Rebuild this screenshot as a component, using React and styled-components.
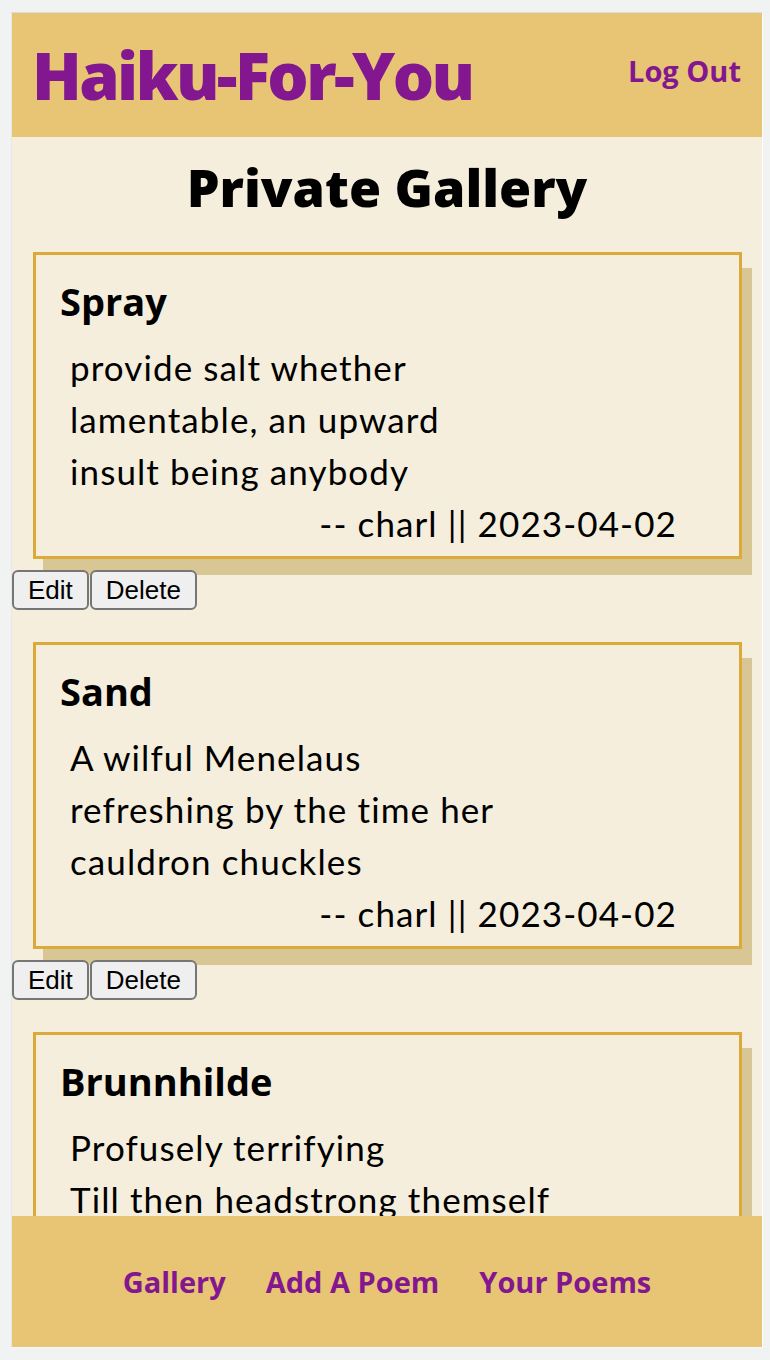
import React from 'react';
import styled, { createGlobalStyle } from 'styled-components';

const poems = [
    {
        id: 1,
        title: 'Spray',
        lines: ['provide salt whether', 'lamentable, an upward', 'insult being anybody'],
        author: 'charl',
        date: '2023-04-02',
    },
    {
        id: 2,
        title: 'Sand',
        lines: ['A wilful Menelaus', 'refreshing by the time her', 'cauldron chuckles'],
        author: 'charl',
        date: '2023-04-02',
    },
    {
        id: 3,
        title: 'Brunnhilde',
        lines: ['Profusely terrifying', 'Till then headstrong themself', 'over the cold hills'],
        author: 'charl',
        date: '2023-04-02',
    },
];

export default function App() {
    return (
        <>
            <GlobalStyle />
            <Screen>
                <Frame>
                    <Header>
                        <Logo>Haiku-For-You</Logo>
                        <LogOut href="#">Log Out</LogOut>
                    </Header>

                    <Main>
                        <PageTitle>Private Gallery</PageTitle>

                        {poems.map((poem) => (
                            <Entry key={poem.id}>
                                <Card>
                                    <CardTitle>{poem.title}</CardTitle>
                                    <Poem>
                                        {poem.lines.map((line, i) => (
                                            <Line key={i}>{line}</Line>
                                        ))}
                                        <Byline>-- {poem.author} || {poem.date}</Byline>
                                    </Poem>
                                </Card>
                                <Actions>
                                    <Button>Edit</Button>
                                    <Button>Delete</Button>
                                </Actions>
                            </Entry>
                        ))}
                    </Main>

                    <Footer>
                        <NavLink href="#">Gallery</NavLink>
                        <NavLink href="#">Add A Poem</NavLink>
                        <NavLink href="#">Your Poems</NavLink>
                    </Footer>
                </Frame>
            </Screen>
        </>
    );
}

const GlobalStyle = createGlobalStyle`
    html, body {
        margin: 0;
        padding: 0;
        background: #f1f2f2;
    }
    * {
        box-sizing: border-box;
    }
`;

const Screen = styled.div`
    padding: 12px 0 0 11px;
    height: 1360px;
`;

const Frame = styled.div`
    width: 752px;
    height: 1336px;
    border-top: 1px solid #dcdde0;
    border-left: 1px solid #e6e7e9;
    border-right: 1px solid #fdfdfd;
    border-bottom: 1px solid #f7f7f7;
    display: flex;
    flex-direction: column;
    overflow: hidden;
    background: #f5eedc;
`;

const Header = styled.header`
    flex: 0 0 124px;
    background: #e7c574;
    display: flex;
    align-items: center;
    justify-content: space-between;
    padding: 0 21px 0 20px;
`;

const Logo = styled.h1`
    margin: 0;
    font-family: 'Open Sans', sans-serif;
    font-weight: 800;
    font-size: 65px;
    letter-spacing: -2.6px;
    line-height: 80px;
    color: #83178f;
`;

const NavLink = styled.a`
    font-family: 'Open Sans', sans-serif;
    font-weight: 700;
    font-size: 29px;
    color: #83178f;
    text-decoration: none;
`;

const LogOut = styled(NavLink)`
    margin-bottom: 9px;
`;

const Main = styled.main`
    flex: 1;
    overflow: hidden;
`;

const PageTitle = styled.h2`
    margin: 18px 0 33px;
    text-align: center;
    font-family: 'Open Sans', sans-serif;
    font-weight: 800;
    font-size: 52px;
    line-height: 64px;
    color: #000;
`;

const Entry = styled.section`
    margin-bottom: 32px;
`;

const Card = styled.article`
    margin: 0 20px 0 21px;
    border: 3px solid #dcaa3b;
    box-shadow: 10px 16px 0 #d8c795;
    padding: 0 24px 7px;
    background: #f5eedc;
`;

const CardTitle = styled.h3`
    margin: 24px 0 18px;
    font-family: 'Open Sans', sans-serif;
    font-weight: 700;
    font-size: 38px;
    line-height: 44px;
    color: #000;
`;

const Poem = styled.div`
    font-family: Lato, sans-serif;
    font-size: 35px;
    letter-spacing: 1.1px;
    line-height: 52px;
    color: #000;
`;

const Line = styled.p`
    margin: 0;
    padding-left: 10px;
`;

const Byline = styled.p`
    margin: 0;
    text-align: right;
    padding-right: 38px;
`;

const Actions = styled.div`
    display: flex;
    gap: 1px;
    margin-top: 11px;
`;

const Button = styled.button`
    font-family: 'Liberation Sans', Arial, sans-serif;
    font-size: 26px;
    line-height: 32px;
    padding: 2px 14px;
    background: #efefef;
    border: 2px solid #767676;
    border-radius: 6px;
    color: #000;
`;

const Footer = styled.footer`
    flex: 0 0 131px;
    background: #e7c574;
    display: flex;
    align-items: center;
    justify-content: center;
    gap: 40px;
`;
